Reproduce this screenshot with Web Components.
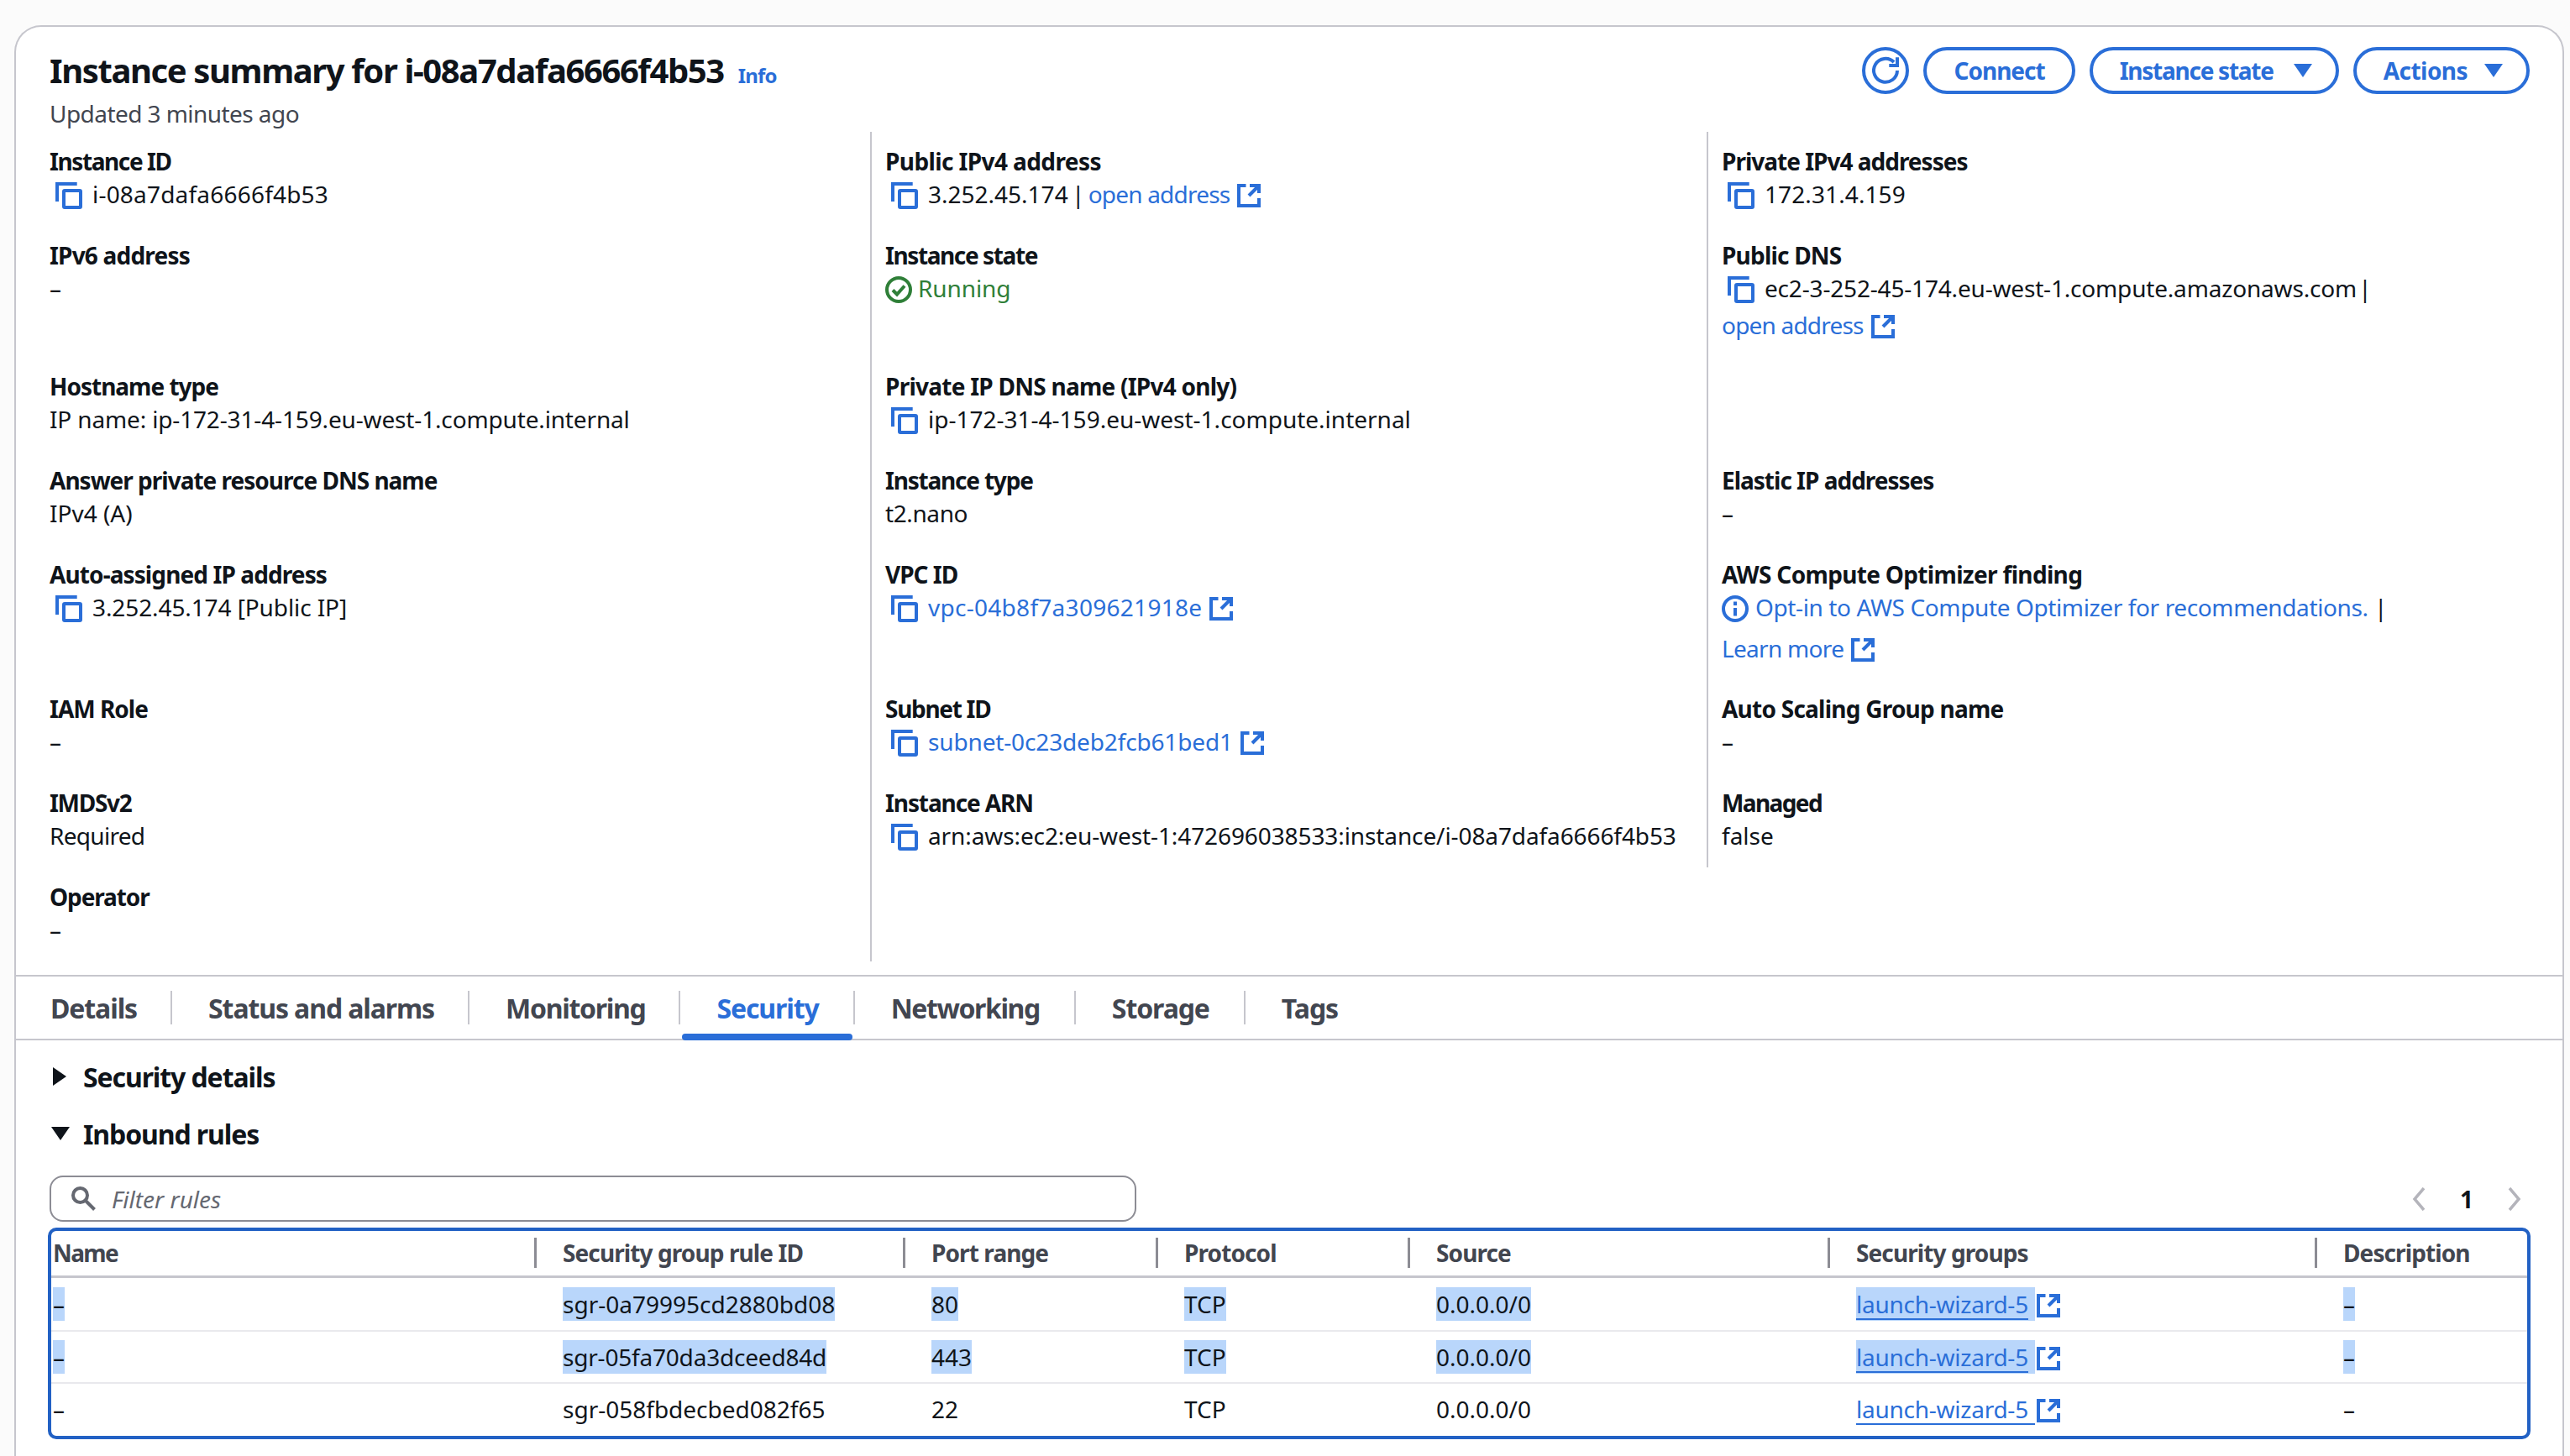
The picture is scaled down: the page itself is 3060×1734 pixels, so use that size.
<!DOCTYPE html>
<html lang="en"><head><meta charset="utf-8"><title>Instance summary</title>
<style>
html,body{margin:0;padding:0;height:1734px;overflow:hidden;background:#fbfbfb;font-family:"Noto Sans",sans-serif;color:#0f141a}
</style></head><body>
<instance-page></instance-page>
<script>
const BLUE='#2a6ed8';
const ICONS={
 copy:`<svg width="32" height="32" viewBox="0 0 32 32" fill="none" stroke="${BLUE}" stroke-width="4"><path d="M2 23V2h23.7"/><rect x="10" y="10" width="20" height="20" rx="1"/></svg>`,
 ext:`<svg width="28" height="28" viewBox="0 0 28 28" fill="none" stroke="${BLUE}" stroke-width="4"><path d="M10.5 2H2v24h24v-9"/><path d="M15 2h11v9"/><path d="M25 3 14 14"/></svg>`,
 ok:`<svg width="32" height="32" viewBox="0 0 32 32" fill="none" stroke="#2f7f38" stroke-width="4"><circle cx="16" cy="16" r="14"/><path d="M9 16.5l5 5 9-10"/></svg>`,
 info:`<svg width="32" height="32" viewBox="0 0 32 32" fill="none" stroke="${BLUE}" stroke-width="4"><circle cx="16" cy="16" r="14"/><path d="M16 15v9.5M16 7.5v4.5"/></svg>`
};
const L=(t,ls)=>`<span slot="label"${ls?` style="letter-spacing:${ls}px"`:''}>${t}</span>`;
const V=(t,ls)=>`<span style="letter-spacing:${ls}px">${t}</span>`;
const A=(t,ls)=>`<aws-link style="letter-spacing:${ls}px">${t}</aws-link>`;
class KvItem extends HTMLElement{
 constructor(){super();this.attachShadow({mode:'open'}).innerHTML=`<style>
 :host{display:block;padding:16px 0 16px 0;box-sizing:border-box;font-size:28px;line-height:40px;color:#0f141a}
 :host([divider]){border-left:2px solid #c6c6cd;padding-left:16px}
 .l{font-weight:700;height:40px;line-height:38px;white-space:nowrap;letter-spacing:-1px}
 .v{white-space:nowrap;margin:-2px 0 2px}
 </style><div class="l"><slot name="label"></slot></div><div class="v"><slot></slot></div>`}
}
class CopyIcon extends HTMLElement{
 constructor(){super();this.attachShadow({mode:'open'}).innerHTML=`<style>:host{display:inline-block;width:32px;height:32px;margin:0 12px 0 7px;vertical-align:-7px}svg{display:block}</style>${ICONS.copy}`}
}
class ExtIcon extends HTMLElement{
 constructor(){super();this.attachShadow({mode:'open'}).innerHTML=`<style>:host{display:inline-block;width:28px;height:28px;margin-left:9px;vertical-align:-5px}svg{display:block}</style>${ICONS.ext}`}
}
class AwsLink extends HTMLElement{
 constructor(){super();this.attachShadow({mode:'open'}).innerHTML=`<style>:host{color:${BLUE}}</style><slot></slot>`}
}
class PillButton extends HTMLElement{
 constructor(){super();const caret=this.hasAttribute('caret');this.attachShadow({mode:'open'}).innerHTML=`<style>
 :host{display:inline-flex;align-items:center;box-sizing:border-box;height:56px;border:4px solid ${BLUE};border-radius:28px;padding:0 ${caret?28:32}px 0 32px;color:${BLUE};font-size:28px;font-weight:700;gap:20px;white-space:nowrap;background:#fff}
 svg{display:block}
 </style><slot></slot>${caret?`<svg width="22" height="16" viewBox="0 0 22 16"><path d="M0 0h22L11 16z" fill="${BLUE}"/></svg>`:''}`}
}
class RefreshButton extends HTMLElement{
 constructor(){super();this.attachShadow({mode:'open'}).innerHTML=`<style>:host{display:block;width:56px;height:56px}svg{display:block}</style>
 <svg width="56" height="56" viewBox="0 0 56 56" fill="none" stroke="${BLUE}" stroke-width="4"><circle cx="28" cy="28" r="26"/><path d="M42 28a14 14 0 1 1-4-10"/><path d="M42 12.3V22H32.3"/></svg>`}
}
class TabBar extends HTMLElement{
 constructor(){super();const tabs=[['Details',-1.1,'0 40px 0 41px'],['Status and alarms',-1.1,'0 40px 0 43px'],['Monitoring',-1.3,'0 40px 0 43px'],['Security',-1.1,'0 41px 0 43px'],['Networking',-1.4,'0 41px 0 43px'],['Storage',-1.1,'0 41px 0 43px'],['Tags',-1,'0 41px 0 43px']];
 this.attachShadow({mode:'open'}).innerHTML=`<style>
 :host{display:flex;height:78px;box-sizing:border-box;border-top:2px solid #c6c6cd;border-bottom:2px solid #c6c6cd;align-items:center;background:#fff}
 .t{position:relative;height:40px;line-height:41px;font-size:32px;font-weight:700;color:#424650;border-right:2px solid #c6c6cd;white-space:nowrap}
 .t:last-child{border-right:0}
 .a{color:${BLUE}}
 .a::after{content:"";position:absolute;left:2px;right:1px;bottom:-19px;height:8px;background:${BLUE};border-radius:4px}
 </style>`+tabs.map(([t,ls,p])=>`<div class="t${t==='Security'?' a':''}" style="letter-spacing:${ls}px;padding:${p}">${t}</div>`).join('')}
}
class ExpandHead extends HTMLElement{
 constructor(){super();const open=this.hasAttribute('open');this.attachShadow({mode:'open'}).innerHTML=`<style>
 :host{display:flex;align-items:center;height:40px;font-size:32px;font-weight:700;letter-spacing:-1.1px;color:#0f141a}
 .i{width:40px;display:flex;justify-content:flex-start;padding-left:${open?2:4}px;box-sizing:border-box}
 svg{display:block}
 </style><div class="i">${open?'<svg width="22" height="16" viewBox="0 0 22 16"><path d="M0 0h22L11 16z" fill="#0f141a"/></svg>':'<svg width="16" height="22" viewBox="0 0 16 22"><path d="M0 0l16 11L0 22z" fill="#0f141a"/></svg>'}</div><slot></slot>`}
}
class FilterBar extends HTMLElement{
 constructor(){super();this.attachShadow({mode:'open'}).innerHTML=`<style>
 :host{display:flex;justify-content:space-between;align-items:center;height:55px}
 .box{box-sizing:border-box;width:1294px;height:55px;border:2px solid #8c8c94;border-radius:16px;display:flex;align-items:center;padding-left:24px;gap:18px;font:italic 28px "Noto Sans",sans-serif;color:#656871;background:#fff}
 .pg{display:flex;align-items:center;padding-right:9px;font-size:28px;font-weight:700;color:#0f141a}
 .n{width:98px;text-align:center}
 svg{display:block}
 </style><div class="box"><svg width="30" height="30" viewBox="0 0 30 30" fill="none" stroke="#656871" stroke-width="4"><circle cx="10.5" cy="10.5" r="8.5"/><path d="M16.5 16.5l11 11"/></svg><span>Filter rules</span></div>
 <div class="pg"><svg width="16" height="28" viewBox="0 0 16 28" fill="none" stroke="#b4b4bb" stroke-width="3.5"><path d="M14 1L3 14l11 13"/></svg><span class="n">1</span><svg width="16" height="28" viewBox="0 0 16 28" fill="none" stroke="#b4b4bb" stroke-width="3.5"><path d="M2 1l11 13L2 27"/></svg></div>`}
}
class RulesTable extends HTMLElement{
 constructor(){super();
 const cols=['Name','Security group rule ID','Port range','Protocol','Source','Security groups','Description'];
 const rows=[['–','sgr-0a79995cd2880bd08','80','TCP','0.0.0.0/0','launch-wizard-5','–',1],['–','sgr-05fa70da3dceed84d','443','TCP','0.0.0.0/0','launch-wizard-5','–',1],['–','sgr-058fbdecbed082f65','22','TCP','0.0.0.0/0','launch-wizard-5','–',0]];
 const hl=(t,s)=>`<span class="${s?'s':''}"${t.startsWith('sgr-05f')?' style="letter-spacing:-.2px"':''}>${t}</span>`;
 this.attachShadow({mode:'open'}).innerHTML=`<style>
 :host{display:block;box-sizing:border-box;width:2956px;height:252px;margin-left:-2px;border:4px solid #2261c4;border-radius:10px;background:#fff;overflow:hidden;font-size:28px}
 .r{display:grid;grid-template-columns:575px 439px 301px 300px 500px 580px 1fr;height:62px;align-items:center;border-bottom:2px solid #e9e9ed;box-sizing:border-box}
 .r:last-child{border-bottom:0;padding-bottom:2px}
 .h{height:56px;border-bottom:3px solid #c6c6cd;color:#424650;font-weight:700;align-items:start;letter-spacing:-.9px}
 .h + .r{height:64px}
 .c{padding-left:34px;line-height:40px;white-space:nowrap}
 .c:first-child{padding-left:2px}
 .h .c{border-left:3px solid #8c8c94;height:36px;line-height:37px;margin-top:8px;padding-left:31px}
 .h .c:first-child{border-left:0;padding-left:2px;letter-spacing:-1.6px}
 .s{background:#b9d6fb;display:inline-block;height:40px}
 .w{letter-spacing:-.25px}
 .w.s{padding-right:8px}
 .w:not(.s) a{padding-right:8px}
 a{color:${BLUE};text-decoration:none;border-bottom:2px solid ${BLUE};display:inline-block;height:37px;}
 </style><div class="r h">${cols.map(c=>`<div class="c">${c}</div>`).join('')}</div>`+
 rows.map(r=>`<div class="r">${r.slice(0,7).map((t,i)=>`<div class="c">${i==5?`<span class="w ${r[7]?'s':''}"><a>${t}</a></span><ext-icon style="margin-left:2px"></ext-icon>`:hl(t,r[7])}</div>`).join('')}</div>`).join('')}
}
class InstancePage extends HTMLElement{
 constructor(){super();this.attachShadow({mode:'open'}).innerHTML=`<style>
 :host{display:block;box-sizing:border-box;margin:30px 7px 0 17px;height:1704px;background:#fff;border:2px solid #c6c6cd;border-bottom:0;border-radius:32px 32px 0 0;padding-top:24px;font-family:"Noto Sans",sans-serif;color:#0f141a;overflow:hidden}
 .head{display:flex;justify-content:space-between;align-items:flex-start;padding:0 39px 0 40px}
 h1{margin:0;font-size:40px;font-weight:700;line-height:56px;white-space:nowrap;letter-spacing:-1.4px}
 h1 span{font-size:24px;line-height:1;letter-spacing:-.8px;font-weight:700;color:${BLUE};margin-left:17px}
 .sub{font-size:28px;line-height:40px;color:#424650;margin-top:3px;letter-spacing:-.56px;margin-bottom:2px}
 .btns{display:flex;gap:17px;align-items:center}
 .grid{display:grid;grid-template-columns:977px 996px 1fr;margin-left:40px;margin-bottom:16px}
 .body{padding:23px 40px 0}
 .gap{height:28px}
 .mt{height:30px}
 .mt2{height:7px}
 .x2{height:44px;line-height:48px}.x3{height:44px;line-height:50px;margin-top:4px}
 .run{color:#2f7f38}
 kv-item>svg{vertical-align:-7px}
 </style>
 <div class="head"><div><h1>Instance summary for i-08a7dafa6666f4b53<span>Info</span></h1><div class="sub">Updated 3 minutes ago</div></div>
 <div class="btns"><refresh-button></refresh-button><pill-button style="letter-spacing:-1px">Connect</pill-button><pill-button caret style="letter-spacing:-1.25px;gap:24px">Instance state</pill-button><pill-button caret style="letter-spacing:-.55px">Actions</pill-button></div></div>
 <div class="grid">
 <kv-item>${L('Instance ID',-1.4)}<copy-icon></copy-icon>${V('i-08a7dafa6666f4b53',.2)}</kv-item>
 <kv-item divider>${L('Public IPv4 address',-.6)}<copy-icon></copy-icon><span style="word-spacing:-3px">3.252.45.174 | </span>${A('open address',-.8)}<ext-icon></ext-icon></kv-item>
 <kv-item divider>${L('Private IPv4 addresses')}<copy-icon></copy-icon>${V('172.31.4.159',.1)}</kv-item>
 <kv-item>${L('IPv6 address',-.8)}–</kv-item>
 <kv-item divider>${L('Instance state',-1.4)}${ICONS.ok}<span class="run" style="margin-left:7px;letter-spacing:-.1px">Running</span></kv-item>
 <kv-item divider>${L('Public DNS',-.8)}<copy-icon></copy-icon>${V('ec2-3-252-45-174.eu-west-1.compute.amazonaws.com',-.18)} <span style="margin-left:-5px">|</span><div class="x2">${A('open address',-.8)}<ext-icon></ext-icon></div></kv-item>
 <kv-item>${L('Hostname type')}${V('IP name: ip-172-31-4-159.eu-west-1.compute.internal',-.15)}</kv-item>
 <kv-item divider>${L('Private IP DNS name (IPv4 only)',-.75)}<copy-icon></copy-icon>ip-172-31-4-159.eu-west-1.compute.internal</kv-item>
 <kv-item divider></kv-item>
 <kv-item>${L('Answer private resource DNS name')}IPv4 (A)</kv-item>
 <kv-item divider>${L('Instance type',-1.2)}${V('t2.nano',-.4)}</kv-item>
 <kv-item divider>${L('Elastic IP addresses')}–</kv-item>
 <kv-item>${L('Auto-assigned IP address',-.9)}<copy-icon></copy-icon>${V('3.252.45.174 [Public IP]',-.1)}</kv-item>
 <kv-item divider>${L('VPC ID')}<copy-icon></copy-icon>${A('vpc-04b8f7a309621918e',.28)}<ext-icon></ext-icon></kv-item>
 <kv-item divider>${L('AWS Compute Optimizer finding',-.67)}${ICONS.info}<aws-link style="margin-left:8px;letter-spacing:-.38px">Opt-in to AWS Compute Optimizer for recommendations.</aws-link> |<div class="x3">${A('Learn more',-.7)}<ext-icon></ext-icon></div></kv-item>
 <kv-item>${L('IAM Role')}–</kv-item>
 <kv-item divider>${L('Subnet ID',-1.3)}<copy-icon></copy-icon>${A('subnet-0c23deb2fcb61bed1',-.15)}<ext-icon></ext-icon></kv-item>
 <kv-item divider>${L('Auto Scaling Group name',-.76)}–</kv-item>
 <kv-item>${L('IMDSv2',-1.3)}${V('Required',-.7)}</kv-item>
 <kv-item divider>${L('Instance ARN',-1.1)}<copy-icon></copy-icon>${V('arn:aws:ec2:eu-west-1:472696038533:instance/i-08a7dafa6666f4b53',-.1)}</kv-item>
 <kv-item divider>${L('Managed',-1.6)}false</kv-item>
 <kv-item>${L('Operator',-1.1)}–</kv-item>
 <kv-item divider></kv-item>
 </div>
 <tab-bar></tab-bar>
 <div class="body">
 <expand-head>Security details</expand-head><div class="gap"></div>
 <expand-head open>Inbound rules</expand-head><div class="mt"></div>
 <filter-bar></filter-bar><div class="mt2"></div>
 <rules-table></rules-table>
 </div>`}
}
for(const [n,c] of Object.entries({'kv-item':KvItem,'copy-icon':CopyIcon,'ext-icon':ExtIcon,'aws-link':AwsLink,'pill-button':PillButton,'refresh-button':RefreshButton,'tab-bar':TabBar,'expand-head':ExpandHead,'filter-bar':FilterBar,'rules-table':RulesTable,'instance-page':InstancePage}))customElements.define(n,c);
</script></body></html>
